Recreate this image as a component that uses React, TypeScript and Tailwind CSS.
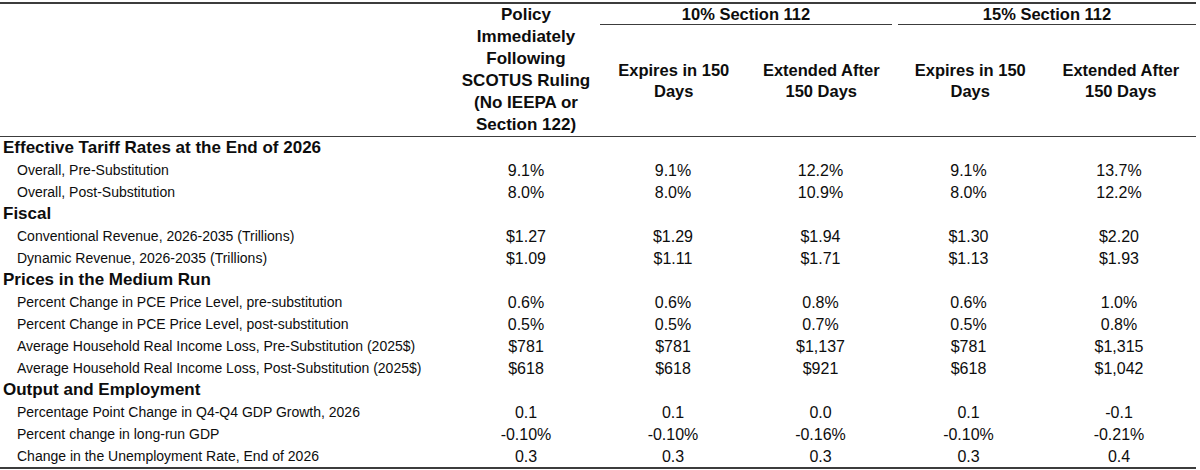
const groups = [
  {
    title: "Effective Tariff Rates at the End of 2026",
    rows: [
      ["Overall, Pre-Substitution", "9.1%", "9.1%", "12.2%", "9.1%", "13.7%"],
      ["Overall, Post-Substitution", "8.0%", "8.0%", "10.9%", "8.0%", "12.2%"],
    ],
  },
  {
    title: "Fiscal",
    rows: [
      ["Conventional Revenue, 2026-2035 (Trillions)", "$1.27", "$1.29", "$1.94", "$1.30", "$2.20"],
      ["Dynamic Revenue, 2026-2035 (Trillions)", "$1.09", "$1.11", "$1.71", "$1.13", "$1.93"],
    ],
  },
  {
    title: "Prices in the Medium Run",
    rows: [
      ["Percent Change in PCE Price Level, pre-substitution", "0.6%", "0.6%", "0.8%", "0.6%", "1.0%"],
      ["Percent Change in PCE Price Level, post-substitution", "0.5%", "0.5%", "0.7%", "0.5%", "0.8%"],
      ["Average Household Real Income Loss, Pre-Substitution (2025$)", "$781", "$781", "$1,137", "$781", "$1,315"],
      ["Average Household Real Income Loss, Post-Substitution (2025$)", "$618", "$618", "$921", "$618", "$1,042"],
    ],
  },
  {
    title: "Output and Employment",
    rows: [
      ["Percentage Point Change in Q4-Q4 GDP Growth, 2026", "0.1", "0.1", "0.0", "0.1", "-0.1"],
      ["Percent change in long-run GDP", "-0.10%", "-0.10%", "-0.16%", "-0.10%", "-0.21%"],
      ["Change in the Unemployment Rate, End of 2026", "0.3", "0.3", "0.3", "0.3", "0.4"],
    ],
  },
];

const cols = "grid grid-cols-[452px_148px_146px_149px_147px_154px]";

function SubHead({ top, bottom }: { top: string; bottom: string }) {
  return (
    <div className="flex flex-1 items-center justify-center text-center text-[16.5px] font-bold leading-[21px]">
      <div>
        {top}
        <br />
        {bottom}
      </div>
    </div>
  );
}

export default function App() {
  return (
    <div
      className="h-[470px] w-[1200px] bg-white text-[#0d0d0d]"
      style={{ fontFamily: '"Liberation Sans", Arial, sans-serif' }}
    >
      <div className="mt-[2px] w-[1196px] border-t-2 border-[#3c3c3c]">
        {/* header */}
        <div className="flex h-[133px] border-b border-[#3c3c3c]">
          <div className="w-[452px]" />
          <div className="w-[148px] text-center text-[17px] font-bold leading-[22px]">
            Policy
            <br />
            Immediately
            <br />
            Following
            <br />
            SCOTUS Ruling
            <br />
            (No IEEPA or
            <br />
            Section 122)
          </div>
          <div className="flex w-[295px] flex-col">
            <div className="mr-[3px] h-[21px] border-b-[1.5px] border-[#3c3c3c] text-center text-[16.5px] font-bold leading-[20px]">
              10% Section 112
            </div>
            <div className="flex flex-1">
              <SubHead top="Expires in 150" bottom="Days" />
              <SubHead top="Extended After" bottom="150 Days" />
            </div>
          </div>
          <div className="flex w-[301px] flex-col">
            <div className="ml-[3px] h-[21px] border-b-[1.5px] border-[#3c3c3c] text-center text-[16.5px] font-bold leading-[20px]">
              15% Section 112
            </div>
            <div className="flex flex-1">
              <SubHead top="Expires in 150" bottom="Days" />
              <SubHead top="Extended After" bottom="150 Days" />
            </div>
          </div>
        </div>

        {/* body */}
        <div className="border-b-2 border-[#3c3c3c]">
          {groups.map((g) => (
            <div key={g.title}>
              <div className="h-[22px] pl-[3px] text-[17px] font-bold leading-[22px]">{g.title}</div>
              {g.rows.map((r) => (
                <div key={r[0]} className={`${cols} h-[22px] items-end`}>
                  <div className="pl-[17px] text-[14px] leading-[22px]">{r[0]}</div>
                  {r.slice(1).map((v, i) => (
                    <div key={i} className="text-center text-[16px] leading-[20px]">
                      {v}
                    </div>
                  ))}
                </div>
              ))}
            </div>
          ))}
        </div>
      </div>
    </div>
  );
}
